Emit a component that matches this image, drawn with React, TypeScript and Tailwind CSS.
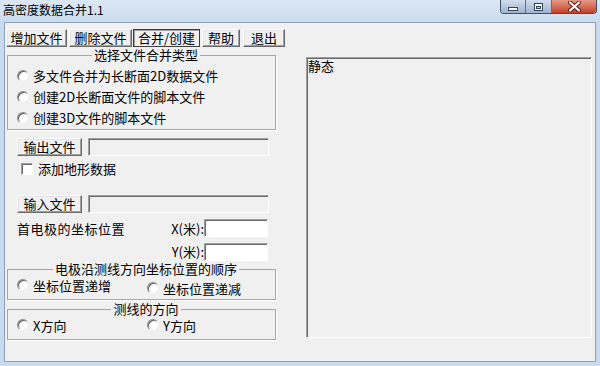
import React from 'react';

// classic win32 3D edges
const raised =
  'border border-t-white border-l-white border-r-[#696969] border-b-[#696969] shadow-[inset_-1px_-1px_0_#a0a0a0,inset_1px_1px_0_#e3e3e3]';
const pushed = 'border border-[#3c3c3c] shadow-[inset_1px_1px_0_#a0a0a0]';
const sunken =
  'border border-t-[#a0a0a0] border-l-[#a0a0a0] border-r-white border-b-white shadow-[inset_1px_1px_0_#696969]';

const Button = ({ label, className = '', pressed = false }: { label: string; className?: string; pressed?: boolean }) => (
  <div
    className={`h-[18px] shrink-0 flex items-center justify-center bg-[#f0f0f0] text-[13px] leading-[14px] text-black ${
      pressed ? pushed : raised
    } ${className}`}
  >
    <span className="block -mt-[1px]">{label}</span>
  </div>
);

const Radio = ({ label, className = '' }: { label: string; className?: string }) => (
  <div className={`flex items-center h-[16px] ${className}`}>
    <span className="w-[12px] h-[12px] shrink-0 rounded-full bg-white border border-t-[#8d8d8d] border-l-[#8d8d8d] border-r-[#ececec] border-b-[#ececec] shadow-[inset_1px_1px_0_#5e5e5e]" />
    <span className="ml-[4px] text-[13px] leading-[15px] whitespace-nowrap">{label}</span>
  </div>
);

const Field = ({ className = '' }: { className?: string }) => (
  <div className={`h-[18px] shrink-0 ${sunken} ${className}`} />
);

const Group = ({
  title,
  className = '',
  children,
}: {
  title: string;
  className?: string;
  children: React.ReactNode;
}) => (
  <fieldset
    className={`ml-[2px] w-[269px] border border-[#a6a6a6] shadow-[1px_1px_0_#ffffff] pl-[9px] pb-[1px] ${className}`}
  >
    <legend className="mx-auto px-[2px] text-[13px] leading-[14px]">{title}</legend>
    {children}
  </fieldset>
);

const App = () => {
  return (
    <div className="w-[600px] h-[366px] overflow-hidden flex flex-col bg-[#c8daee] text-black leading-[16px] font-['Noto_Sans_CJK_SC',sans-serif]">
      {/* title bar */}
      <div className="h-[22px] shrink-0 flex items-start justify-between bg-linear-to-b from-[#dce8f5] to-[#cadcf0]">
        <div className="pt-[2px] pl-[3px] text-[12px] leading-[16px]">高密度数据合并1.1</div>
        <div className="mr-[3px] flex h-[14px] border border-t-0 border-[#3e4f69] rounded-b-[4px] overflow-hidden">
          <div className="w-[25px] flex items-center justify-center bg-linear-to-b from-[#d2deed] to-[#9fb3cf] border-r border-[#5d6f8a]">
            <span className="w-[10px] h-[4px] mt-[4px] bg-white border border-[#34445c]" />
          </div>
          <div className="w-[26px] flex items-center justify-center bg-linear-to-b from-[#d2deed] to-[#9fb3cf] border-r border-[#5d6f8a]">
            <span className="w-[9px] h-[8px] bg-white border border-[#34445c] flex items-end justify-center pb-[1px]">
              <span className="w-[5px] h-[3px] bg-[#c0cee0] border border-[#34445c]" />
            </span>
          </div>
          <div className="w-[44px] flex items-center justify-center bg-linear-to-b from-[#e59a88] to-[#c13e27]">
            <svg width="15" height="11" viewBox="0 0 15 11">
              <path d="M3 1.5 L12 9.5 M12 1.5 L3 9.5" stroke="#5a1a10" strokeWidth="4" strokeLinecap="round" />
              <path d="M3 1.5 L12 9.5 M12 1.5 L3 9.5" stroke="#ffffff" strokeWidth="2.2" strokeLinecap="round" />
            </svg>
          </div>
        </div>
      </div>

      {/* client area */}
      <div className="mx-[4px] h-[340px] shrink-0 border border-[#8da1ba] bg-[#f0f0f0] flex">
        <div className="w-[271px] shrink-0 flex flex-col">
          <div className="mt-[6px] ml-[1px] flex">
            <Button label="增加文件" className="w-[61px]" />
            <Button label="删除文件" className="ml-[2px] w-[63px]" />
            <Button label="合并/创建" className="ml-[1px] w-[67px]" pressed />
            <Button label="帮助" className="ml-[2px] w-[38px]" />
            <Button label="退出" className="ml-[3px] w-[42px]" />
          </div>

          <Group title="选择文件合并类型" className="mt-[1px] pt-[3px]">
            <div className="h-[21px] flex items-center">
              <Radio label="多文件合并为长断面2D数据文件" />
            </div>
            <div className="h-[21px] flex items-center">
              <Radio label="创建2D长断面文件的脚本文件" />
            </div>
            <div className="h-[21px] flex items-center">
              <Radio label="创建3D文件的脚本文件" />
            </div>
          </Group>

          <div className="mt-[8px] ml-[12px] flex">
            <Button label="输出文件" className="w-[65px]" />
            <Field className="ml-[6px] w-[181px] bg-[#f0f0f0]" />
          </div>

          <div className="mt-[2px] ml-[16px] h-[21px] flex items-center">
            <span className={`w-[12px] h-[12px] bg-white ${sunken}`} />
            <span className="ml-[5px] text-[13px] leading-[16px]">添加地形数据</span>
          </div>

          <div className="mt-[16px] ml-[12px] flex">
            <Button label="输入文件" className="w-[65px]" />
            <Field className="ml-[6px] w-[181px] bg-[#f0f0f0]" />
          </div>

          <div className="mt-[6px] ml-[12px] flex items-center h-[18px]">
            <span className="w-[145px] text-[13px] leading-[15px] tracking-[0.5px]">首电极的坐标位置</span>
            <span className="w-[42px] text-right text-[13px] leading-[15px]">X(米):</span>
            <Field className="w-[64px] bg-white" />
          </div>
          <div className="mt-[6px] ml-[157px] flex items-center h-[18px]">
            <span className="w-[42px] text-right text-[13px] leading-[14px]">Y(米):</span>
            <Field className="w-[64px] bg-white" />
          </div>

          <Group title="电极沿测线方向坐标位置的顺序" className="mt-[1px] pt-[1px]">
            <div className="h-[21px] flex items-start">
              <Radio label="坐标位置递增" className="w-[130px]" />
              <Radio label="坐标位置递减" className="mt-[3px]" />
            </div>
          </Group>

          <Group title="测线的方向" className="mt-[2px] pt-[1px]">
            <div className="h-[21px] flex items-start">
              <Radio label="X方向" className="w-[130px]" />
              <Radio label="Y方向" />
            </div>
          </Group>
        </div>

        <div className={`ml-[30px] mt-[34px] w-[286px] h-[281px] shrink-0 bg-[#f0f0f0] ${sunken} pl-[1px]`}>
          <div className="text-[13px] leading-[16px]">静态</div>
        </div>
      </div>
    </div>
  );
};

export default App;
